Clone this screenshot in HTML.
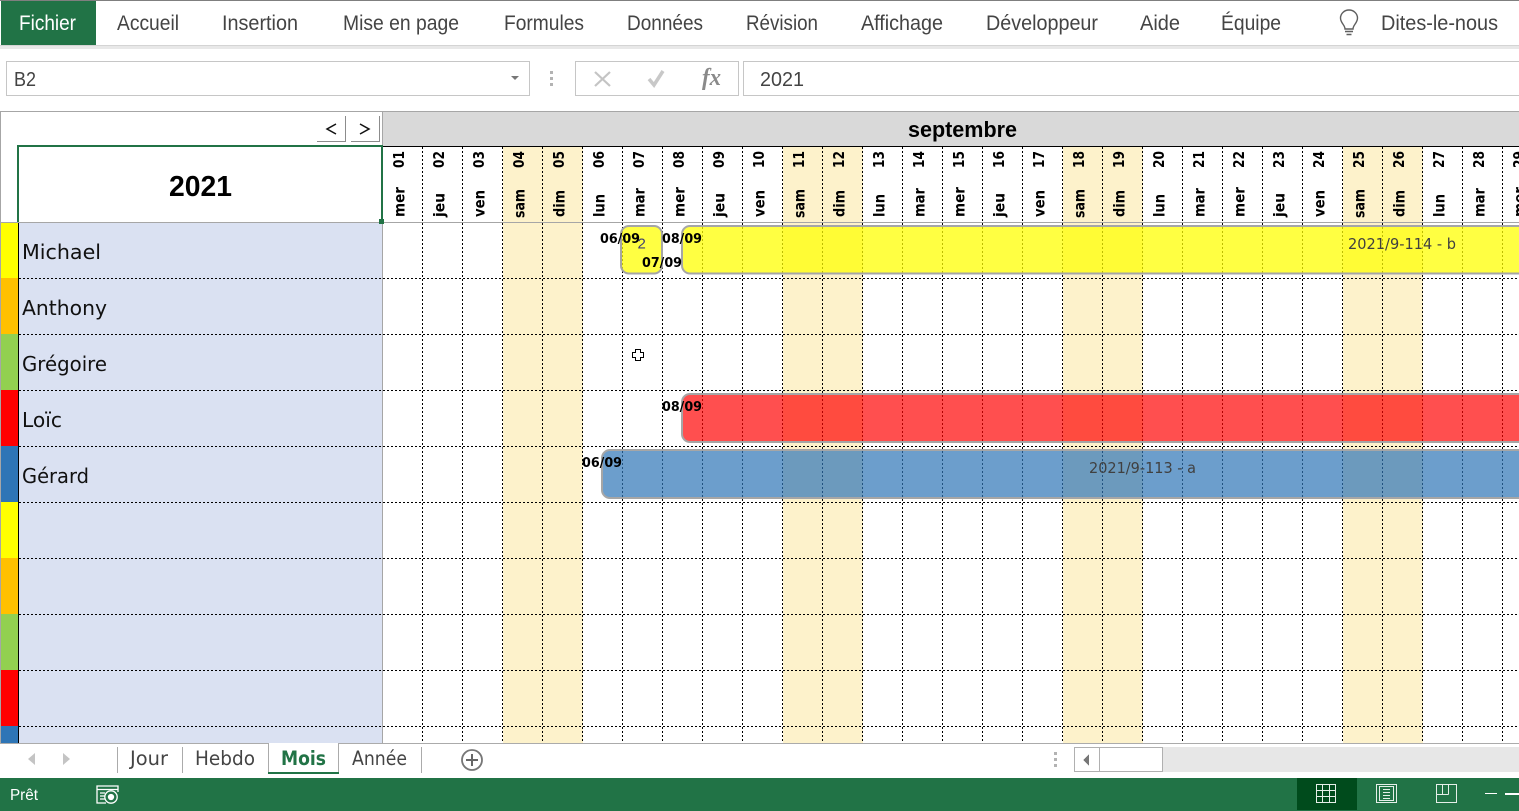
<!DOCTYPE html>
<html lang="fr">
<head>
<meta charset="utf-8">
<title>Planning Excel</title>
<style>
html,body{margin:0;padding:0;background:#fff;width:1519px;height:811px;overflow:hidden}
svg{display:block}
text{font-family:"Liberation Sans",sans-serif}
.r{font-size:21px;fill:#444}
.c{shape-rendering:crispEdges}
.h text{font-family:"DejaVu Sans",sans-serif;font-weight:700;font-size:15.5px;fill:#000}
.n{font-family:"DejaVu Sans",sans-serif;font-size:20.5px;fill:#111}
.d{font-family:"DejaVu Sans",sans-serif;font-weight:700;font-size:13.500px;fill:#000}
.t{font-family:"DejaVu Sans",sans-serif;font-size:15px;fill:#404040}
.s{font-family:"DejaVu Sans",sans-serif;font-size:19.500px;fill:#444}
</style>
</head>
<body>
<svg width="1519" height="811" viewBox="0 0 1519 811" xmlns="http://www.w3.org/2000/svg">
<rect width="1519" height="811" fill="#fff"/>
<!-- Ribbon -->
<rect class="c" y="0" width="1519" height="1" fill="#7f7f7f"/>
<rect class="c" x="1" y="1" width="95" height="44" fill="#217346"/>
<rect class="c" y="45" width="1519" height="1" fill="#d4d4d4"/>
<rect class="c" y="46" width="1519" height="3" fill="#e8e8e8"/>
<text class="r" x="19" y="30" textLength="57" lengthAdjust="spacingAndGlyphs" style="fill:#fff">Fichier</text>
<text class="r" x="117" y="30" textLength="62" lengthAdjust="spacingAndGlyphs">Accueil</text>
<text class="r" x="222" y="30" textLength="76" lengthAdjust="spacingAndGlyphs">Insertion</text>
<text class="r" x="343" y="30" textLength="116" lengthAdjust="spacingAndGlyphs">Mise en page</text>
<text class="r" x="504" y="30" textLength="80" lengthAdjust="spacingAndGlyphs">Formules</text>
<text class="r" x="627" y="30" textLength="76" lengthAdjust="spacingAndGlyphs">Données</text>
<text class="r" x="746" y="30" textLength="72" lengthAdjust="spacingAndGlyphs">Révision</text>
<text class="r" x="861" y="30" textLength="82" lengthAdjust="spacingAndGlyphs">Affichage</text>
<text class="r" x="986" y="30" textLength="112" lengthAdjust="spacingAndGlyphs">Développeur</text>
<text class="r" x="1140" y="30" textLength="40" lengthAdjust="spacingAndGlyphs">Aide</text>
<text class="r" x="1221" y="30" textLength="60" lengthAdjust="spacingAndGlyphs">Équipe</text>
<text class="r" x="1381" y="30" textLength="117" lengthAdjust="spacingAndGlyphs">Dites-le-nous</text>
<g fill="none" stroke="#5f5f5f" stroke-width="1.4">
<path d="M1345 29c0-4-4.500-6-4.500-11a8.500 8 0 0 1 17 0c0 5-4.500 7-4.500 11z"/>
<path d="M1345 31.500h8M1346.500 34.500h5"/>
</g>
<!-- Formula bar -->
<g class="c" fill="#fff" stroke="#c6c6c6">
<rect x="6.500" y="61.500" width="523" height="34"/>
<rect x="575.500" y="61.500" width="163" height="34"/>
<rect x="743.500" y="61.500" width="780" height="34"/>
</g>
<text x="14" y="86" font-size="20" fill="#444" textLength="22" lengthAdjust="spacingAndGlyphs">B2</text>
<path d="M511 76h8l-4 4z" fill="#777"/>
<g class="c" fill="#b3b3b3"><rect x="550" y="71" width="3" height="3"/><rect x="550" y="77" width="3" height="3"/><rect x="550" y="83" width="3" height="3"/></g>
<path d="M595 72l15 14M610 72l-15 14" stroke="#c4c4c4" stroke-width="2.200" fill="none"/>
<path d="M649 79l5 6 9-14" stroke="#c8c8c8" stroke-width="3.500" fill="none"/>
<text x="702" y="85" font-size="24" font-style="italic" font-weight="700" fill="#8a8a8a" style="font-family:'Liberation Serif',serif" textLength="19" lengthAdjust="spacingAndGlyphs">fx</text>
<text x="760" y="86" font-size="20" fill="#444" textLength="44" lengthAdjust="spacingAndGlyphs">2021</text>
<!-- Sheet frame -->
<rect class="c" y="111" width="1519" height="1" fill="#a6a6a6"/>
<rect class="c" x="0" y="111" width="1" height="632" fill="#a6a6a6"/>
<rect class="c" x="383" y="112" width="1136" height="34" fill="#d9d9d9"/>
<text x="908" y="137" font-size="22" font-weight="700" fill="#000" textLength="109" lengthAdjust="spacingAndGlyphs">septembre</text>
<!-- Weekend fills -->
<g class="c" fill="#fdf2cb">
<rect x="503" y="147" width="80" height="596"/>
<rect x="783" y="147" width="80" height="596"/>
<rect x="1063" y="147" width="80" height="596"/>
<rect x="1343" y="147" width="80" height="596"/>
</g>
<!-- Left panel -->
<rect class="c" x="19" y="223" width="363" height="520" fill="#dae1f2"/>
<g class="c">
<rect x="1" y="223" width="17" height="55" fill="#ffff00"/>
<rect x="1" y="278" width="17" height="56" fill="#ffc000"/>
<rect x="1" y="334" width="17" height="56" fill="#92d050"/>
<rect x="1" y="390" width="17" height="56" fill="#ff0000"/>
<rect x="1" y="446" width="17" height="56" fill="#2e75b6"/>
<rect x="1" y="502" width="17" height="56" fill="#ffff00"/>
<rect x="1" y="558" width="17" height="56" fill="#ffc000"/>
<rect x="1" y="614" width="17" height="56" fill="#92d050"/>
<rect x="1" y="670" width="17" height="56" fill="#ff0000"/>
<rect x="1" y="726" width="17" height="17" fill="#2e75b6"/>
<rect x="18" y="223" width="1" height="520" fill="#000"/>
<rect x="382" y="111" width="1" height="632" fill="#a6a6a6"/>
<rect x="383" y="146" width="1136" height="1" fill="#000"/>
<rect x="0" y="222" width="1519" height="1" fill="#a6a6a6"/>
</g>
<!-- Grid lines -->
<g class="c" stroke="#000" stroke-width="1" stroke-dasharray="2 2" fill="none">
<path d="M19 278.500H1519M19 334.500H1519M19 390.500H1519M19 446.500H1519M19 502.500H1519M19 558.500H1519M19 614.500H1519M19 670.500H1519M19 726.500H1519"/>
<path d="M422.500 147V222M462.500 147V222M502.500 147V222M542.500 147V222M582.500 147V222M622.500 147V222M662.500 147V222M702.500 147V222M742.500 147V222M782.500 147V222M822.500 147V222M862.500 147V222M902.500 147V222M942.500 147V222M982.500 147V222M1022.500 147V222M1062.500 147V222M1102.500 147V222M1142.500 147V222M1182.500 147V222M1222.500 147V222M1262.500 147V222M1302.500 147V222M1342.500 147V222M1382.500 147V222M1422.500 147V222M1462.500 147V222M1502.500 147V222"/>
<path d="M422.500 223V743M462.500 223V743M502.500 223V743M542.500 223V743M582.500 223V743M622.500 223V743M662.500 223V743M702.500 223V743M742.500 223V743M782.500 223V743M822.500 223V743M862.500 223V743M902.500 223V743M942.500 223V743M982.500 223V743M1022.500 223V743M1062.500 223V743M1102.500 223V743M1142.500 223V743M1182.500 223V743M1222.500 223V743M1262.500 223V743M1302.500 223V743M1342.500 223V743M1382.500 223V743M1422.500 223V743M1462.500 223V743M1502.500 223V743"/>
</g>
<!-- Selected cell -->
<rect class="c" x="18" y="145" width="364" height="2" fill="#217346"/>
<rect class="c" x="17" y="145" width="2" height="77" fill="#217346"/>
<rect class="c" x="381" y="145" width="2" height="77" fill="#217346"/>
<rect class="c" x="379" y="219" width="5" height="5" fill="#217346"/>
<text x="169" y="196" font-size="29" font-weight="700" fill="#000" textLength="63" lengthAdjust="spacingAndGlyphs">2021</text>
<!-- Prev / next buttons -->
<g class="c" fill="#8c8c8c">
<rect x="317" y="141" width="29" height="1"/><rect x="345" y="116" width="1" height="26"/>
<rect x="351" y="141" width="29" height="1"/><rect x="379" y="116" width="1" height="26"/>
</g>
<path d="M336 124l-9 5 9 5M360 124l9 5-9 5" fill="none" stroke="#111" stroke-width="1.500"/>
<!-- Header labels -->
<g class="h">
<text transform="translate(404 168) rotate(-90)" textLength="17" lengthAdjust="spacingAndGlyphs">01</text>
<text transform="translate(444 168) rotate(-90)" textLength="17" lengthAdjust="spacingAndGlyphs">02</text>
<text transform="translate(484 168) rotate(-90)" textLength="17" lengthAdjust="spacingAndGlyphs">03</text>
<text transform="translate(524 168) rotate(-90)" textLength="17" lengthAdjust="spacingAndGlyphs">04</text>
<text transform="translate(564 168) rotate(-90)" textLength="17" lengthAdjust="spacingAndGlyphs">05</text>
<text transform="translate(604 168) rotate(-90)" textLength="17" lengthAdjust="spacingAndGlyphs">06</text>
<text transform="translate(644 168) rotate(-90)" textLength="17" lengthAdjust="spacingAndGlyphs">07</text>
<text transform="translate(684 168) rotate(-90)" textLength="17" lengthAdjust="spacingAndGlyphs">08</text>
<text transform="translate(724 168) rotate(-90)" textLength="17" lengthAdjust="spacingAndGlyphs">09</text>
<text transform="translate(764 168) rotate(-90)" textLength="17" lengthAdjust="spacingAndGlyphs">10</text>
<text transform="translate(804 168) rotate(-90)" textLength="17" lengthAdjust="spacingAndGlyphs">11</text>
<text transform="translate(844 168) rotate(-90)" textLength="17" lengthAdjust="spacingAndGlyphs">12</text>
<text transform="translate(884 168) rotate(-90)" textLength="17" lengthAdjust="spacingAndGlyphs">13</text>
<text transform="translate(924 168) rotate(-90)" textLength="17" lengthAdjust="spacingAndGlyphs">14</text>
<text transform="translate(964 168) rotate(-90)" textLength="17" lengthAdjust="spacingAndGlyphs">15</text>
<text transform="translate(1004 168) rotate(-90)" textLength="17" lengthAdjust="spacingAndGlyphs">16</text>
<text transform="translate(1044 168) rotate(-90)" textLength="17" lengthAdjust="spacingAndGlyphs">17</text>
<text transform="translate(1084 168) rotate(-90)" textLength="17" lengthAdjust="spacingAndGlyphs">18</text>
<text transform="translate(1124 168) rotate(-90)" textLength="17" lengthAdjust="spacingAndGlyphs">19</text>
<text transform="translate(1164 168) rotate(-90)" textLength="17" lengthAdjust="spacingAndGlyphs">20</text>
<text transform="translate(1204 168) rotate(-90)" textLength="17" lengthAdjust="spacingAndGlyphs">21</text>
<text transform="translate(1244 168) rotate(-90)" textLength="17" lengthAdjust="spacingAndGlyphs">22</text>
<text transform="translate(1284 168) rotate(-90)" textLength="17" lengthAdjust="spacingAndGlyphs">23</text>
<text transform="translate(1324 168) rotate(-90)" textLength="17" lengthAdjust="spacingAndGlyphs">24</text>
<text transform="translate(1364 168) rotate(-90)" textLength="17" lengthAdjust="spacingAndGlyphs">25</text>
<text transform="translate(1404 168) rotate(-90)" textLength="17" lengthAdjust="spacingAndGlyphs">26</text>
<text transform="translate(1444 168) rotate(-90)" textLength="17" lengthAdjust="spacingAndGlyphs">27</text>
<text transform="translate(1484 168) rotate(-90)" textLength="17" lengthAdjust="spacingAndGlyphs">28</text>
<text transform="translate(1524 168) rotate(-90)" textLength="17" lengthAdjust="spacingAndGlyphs">29</text>
<text transform="translate(404.500 217) rotate(-90)" textLength="30" lengthAdjust="spacingAndGlyphs">mer</text>
<text transform="translate(444.500 217) rotate(-90)" textLength="24" lengthAdjust="spacingAndGlyphs">jeu</text>
<text transform="translate(484.500 217) rotate(-90)" textLength="27" lengthAdjust="spacingAndGlyphs">ven</text>
<text transform="translate(524.500 218) rotate(-90)" textLength="29" lengthAdjust="spacingAndGlyphs">sam</text>
<text transform="translate(564.500 217) rotate(-90)" textLength="27" lengthAdjust="spacingAndGlyphs">dim</text>
<text transform="translate(604.500 217) rotate(-90)" textLength="23" lengthAdjust="spacingAndGlyphs">lun</text>
<text transform="translate(644.500 217) rotate(-90)" textLength="29" lengthAdjust="spacingAndGlyphs">mar</text>
<text transform="translate(684.500 217) rotate(-90)" textLength="30" lengthAdjust="spacingAndGlyphs">mer</text>
<text transform="translate(724.500 217) rotate(-90)" textLength="24" lengthAdjust="spacingAndGlyphs">jeu</text>
<text transform="translate(764.500 217) rotate(-90)" textLength="27" lengthAdjust="spacingAndGlyphs">ven</text>
<text transform="translate(804.500 218) rotate(-90)" textLength="29" lengthAdjust="spacingAndGlyphs">sam</text>
<text transform="translate(844.500 217) rotate(-90)" textLength="27" lengthAdjust="spacingAndGlyphs">dim</text>
<text transform="translate(884.500 217) rotate(-90)" textLength="23" lengthAdjust="spacingAndGlyphs">lun</text>
<text transform="translate(924.500 217) rotate(-90)" textLength="29" lengthAdjust="spacingAndGlyphs">mar</text>
<text transform="translate(964.500 217) rotate(-90)" textLength="30" lengthAdjust="spacingAndGlyphs">mer</text>
<text transform="translate(1004.500 217) rotate(-90)" textLength="24" lengthAdjust="spacingAndGlyphs">jeu</text>
<text transform="translate(1044.500 217) rotate(-90)" textLength="27" lengthAdjust="spacingAndGlyphs">ven</text>
<text transform="translate(1084.500 218) rotate(-90)" textLength="29" lengthAdjust="spacingAndGlyphs">sam</text>
<text transform="translate(1124.500 217) rotate(-90)" textLength="27" lengthAdjust="spacingAndGlyphs">dim</text>
<text transform="translate(1164.500 217) rotate(-90)" textLength="23" lengthAdjust="spacingAndGlyphs">lun</text>
<text transform="translate(1204.500 217) rotate(-90)" textLength="29" lengthAdjust="spacingAndGlyphs">mar</text>
<text transform="translate(1244.500 217) rotate(-90)" textLength="30" lengthAdjust="spacingAndGlyphs">mer</text>
<text transform="translate(1284.500 217) rotate(-90)" textLength="24" lengthAdjust="spacingAndGlyphs">jeu</text>
<text transform="translate(1324.500 217) rotate(-90)" textLength="27" lengthAdjust="spacingAndGlyphs">ven</text>
<text transform="translate(1364.500 218) rotate(-90)" textLength="29" lengthAdjust="spacingAndGlyphs">sam</text>
<text transform="translate(1404.500 217) rotate(-90)" textLength="27" lengthAdjust="spacingAndGlyphs">dim</text>
<text transform="translate(1444.500 217) rotate(-90)" textLength="23" lengthAdjust="spacingAndGlyphs">lun</text>
<text transform="translate(1484.500 217) rotate(-90)" textLength="29" lengthAdjust="spacingAndGlyphs">mar</text>
<text transform="translate(1524.500 217) rotate(-90)" textLength="30" lengthAdjust="spacingAndGlyphs">mer</text>
</g>
<!-- Names -->
<text class="n" x="22" y="259" textLength="79" lengthAdjust="spacingAndGlyphs">Michael</text>
<text class="n" x="22" y="315" textLength="85" lengthAdjust="spacingAndGlyphs">Anthony</text>
<text class="n" x="22" y="371" textLength="85" lengthAdjust="spacingAndGlyphs">Grégoire</text>
<text class="n" x="22" y="427" textLength="40" lengthAdjust="spacingAndGlyphs">Loïc</text>
<text class="n" x="22" y="483" textLength="67" lengthAdjust="spacingAndGlyphs">Gérard</text>
<!-- Bars -->
<g stroke="#a6a6a6" stroke-width="2">
<rect x="621" y="226" width="41" height="47.500" rx="8" fill="#ffff00" fill-opacity=".74"/>
<rect x="682" y="226" width="860" height="47.500" rx="8" fill="#ffff00" fill-opacity=".74"/>
<rect x="682" y="394" width="860" height="48" rx="8" fill="#ff0000" fill-opacity=".69"/>
<rect x="602" y="450" width="940" height="48" rx="8" fill="#2e75b6" fill-opacity=".7"/>
</g>
<text class="d" x="600" y="243" textLength="40" lengthAdjust="spacingAndGlyphs">06/09</text>
<text x="637.500" y="248.500" font-size="15" fill="#404070">2</text>
<text class="d" x="662" y="243" textLength="40" lengthAdjust="spacingAndGlyphs">08/09</text>
<text class="d" x="642" y="267" textLength="40" lengthAdjust="spacingAndGlyphs">07/09</text>
<text class="d" x="662" y="411" textLength="40" lengthAdjust="spacingAndGlyphs">08/09</text>
<text class="d" x="582" y="467" textLength="40" lengthAdjust="spacingAndGlyphs">06/09</text>
<text class="t" x="1348" y="249" textLength="108" lengthAdjust="spacingAndGlyphs">2021/9-114 - b</text>
<text class="t" x="1089" y="473" textLength="107" lengthAdjust="spacingAndGlyphs">2021/9-113 - a</text>
<!-- Cursor -->
<path class="c" d="M635.500 349.500h5v3h3v5h-3v3h-5v-3h-3v-5h3z" fill="#fff" stroke="#000" stroke-width="1"/>
<!-- Sheet tabs bar -->
<rect class="c" y="743" width="1519" height="35" fill="#fff"/>
<rect class="c" y="743" width="1519" height="1" fill="#ababab"/>
<rect class="c" x="268" y="743" width="1" height="30" fill="#ababab"/>
<rect class="c" x="338" y="743" width="1" height="30" fill="#ababab"/>
<rect class="c" x="269" y="743" width="69" height="1" fill="#fff"/>
<rect class="c" x="268" y="772" width="71" height="2" fill="#217346"/>
<g class="c" fill="#ababab">
<rect x="117" y="747" width="1" height="26"/>
<rect x="182" y="747" width="1" height="26"/>
<rect x="421" y="747" width="1" height="26"/>
</g>
<path d="M35 753v12l-7-6zM63 753v12l7-6z" fill="#c4c4c4"/>
<text class="s" x="130" y="765" textLength="38" lengthAdjust="spacingAndGlyphs">Jour</text>
<text class="s" x="195" y="765" textLength="60" lengthAdjust="spacingAndGlyphs">Hebdo</text>
<text class="s" x="281" y="765" textLength="45" lengthAdjust="spacingAndGlyphs" style="fill:#217346;font-weight:700">Mois</text>
<text class="s" x="352" y="765" textLength="55" lengthAdjust="spacingAndGlyphs">Année</text>
<circle cx="472" cy="760" r="10" fill="none" stroke="#777" stroke-width="1.800"/>
<path d="M472 754v12M466 760h12" stroke="#666" stroke-width="2" fill="none"/>
<g class="c" fill="#b3b3b3"><rect x="1054" y="752" width="3" height="3"/><rect x="1054" y="758" width="3" height="3"/><rect x="1054" y="764" width="3" height="3"/></g>
<rect class="c" x="1163" y="747" width="356" height="25" fill="#e7e7e7"/>
<rect class="c" x="1074.500" y="747.500" width="25" height="24" fill="#fff" stroke="#b0b0b0"/>
<rect class="c" x="1099.500" y="747.500" width="63" height="24" fill="#fff" stroke="#b0b0b0"/>
<path class="c" d="M1089 754v12l-6-6z" fill="#777"/>
<!-- Status bar -->
<rect class="c" y="778" width="1519" height="33" fill="#217346"/>
<text x="10" y="800" font-size="15.500" fill="#fff" textLength="28" lengthAdjust="spacingAndGlyphs">Prêt</text>
<g fill="none" stroke="#fff" stroke-width="1.300">
<path d="M106 803H97V786h21v6"/>
<path d="M97 789.500h21"/>
<path d="M100 793h5M100 796h5M100 799h5"/>
<circle cx="111" cy="797" r="6.200"/>
<circle cx="111" cy="797" r="2.500" fill="#fff"/>
</g>
<rect class="c" x="1297" y="778" width="60" height="32" fill="#004b1c"/>
<g class="c" fill="none" stroke="#e6efe9" stroke-width="1">
<path d="M1316.500 784.500h19v18h-19zM1322.500 784.500v18M1329.500 784.500v18M1316.500 790.500h19M1316.500 796.500h19" stroke-width="1.400"/>
<rect x="1376.500" y="784.500" width="20" height="18" stroke-width="1.400"/>
<rect x="1379.500" y="786.500" width="14" height="14"/>
<path d="M1383 789.500h7M1383 792.500h7M1383 795.500h7M1383 798.500h7"/>
<rect x="1436.500" y="784.500" width="20" height="18" stroke-width="1.400"/>
<path d="M1442.500 784.500v10M1448.500 784.500v10M1436.500 794.500h12" stroke-width="1.400"/>
</g>
<rect class="c" x="1485" y="793" width="12" height="1" fill="#fff"/>
<rect class="c" x="1505" y="793" width="14" height="2" fill="#fff"/>
</svg>
</body>
</html>
